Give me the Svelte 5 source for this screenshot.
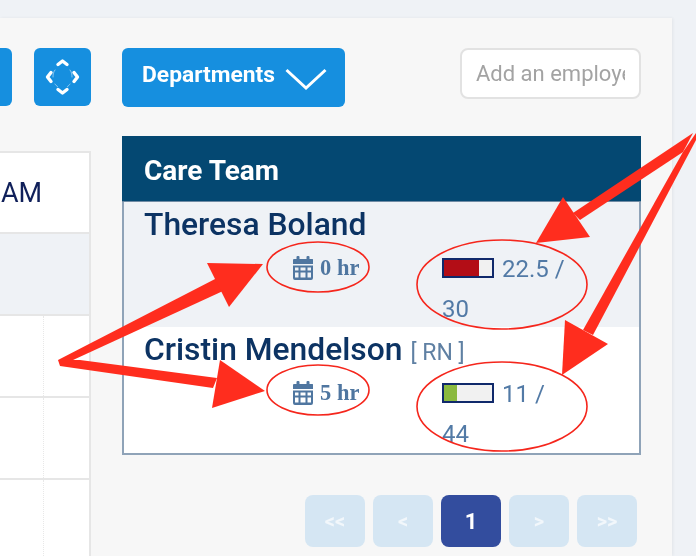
<script>
  const team = [
    { name: 'Theresa Boland', role: '', hours: 0, used: '22.5', total: 30, pct: 72, tone: 'over', shade: true },
    { name: 'Cristin Mendelson', role: '[ RN ]', hours: 5, used: '11', total: 44, pct: 27, tone: 'ok', shade: false }
  ];
  const pages = ['<<', '<', '1', '>', '>>'];
  const rows = [0, 1, 2, 3];
</script>

<div class="page">
  <div class="panel">
    <section class="left">
      <div class="tools">
        <div class="btn stub"></div>
        <button class="btn move" aria-label="Move">
          <svg viewBox="0 0 57 58" width="57" height="58" fill="none" stroke="#fff" stroke-width="3.4" stroke-linecap="round" stroke-linejoin="round">
            <path d="M24 16.500l4.500-3.500 4.500 3.500" />
            <path d="M24 41.500l4.500 3.500 4.500-3.500" />
            <path d="M17 24.500l-3.500 4.500 3.500 4.500" />
            <path d="M40 24.500l3.500 4.500-3.500 4.500" />
            <path d="M21 22c-1.500 2-2 4-2 7M36 22c1.500 2 2 4 2 7M21 36c.8 1.200 1.500 2 2.500 2.500M36 36c-.8 1.200-1.500 2-2.500 2.500" stroke-width="0.9" opacity="0.55" />
          </svg>
        </button>
      </div>
      <div class="table">
        <div class="head">AM</div>
        <div class="band"></div>
        {#each rows as r}
          <div class="cell"><i></i></div>
        {/each}
      </div>
    </section>

    <section class="right">
      <div class="tools">
        <button class="btn dept">
          <span>Departments</span>
          <svg viewBox="0 0 42 24" width="42" height="24" fill="none" stroke="#fff" stroke-width="3">
            <path d="M1.500 3L21 21 40.500 3" />
          </svg>
        </button>
        <input class="search" placeholder="Add an employee" />
      </div>

      <div class="care">
        <h2>Care Team</h2>
        <div class="list">
          {#each team as p}
            <article class:shade={p.shade}>
              <div class="name">{p.name}{#if p.role}<span class="role">{p.role}</span>{/if}</div>
              <div class="stats">
                <div class="hours">
                  <svg viewBox="0 0 20 24" width="20" height="24" fill="#4f76a0">
                    <rect x="3.500" y="0" width="3" height="5" rx="1" />
                    <rect x="13.500" y="0" width="3" height="5" rx="1" />
                    <path d="M1.500 3h18a.5.5 0 0 1 .5.500V8H0V3.500A1.500 1.500 0 0 1 1.500 3z" />
                    <path fill-rule="evenodd" d="M0 9.500h20V22a2 2 0 0 1-2 2H2a2 2 0 0 1-2-2zM2 11.500v3h3.500v-3zM7.500 11.500v3h5v-3zM14.500 11.500v3H18v-3zM2 16.500v5h3.500v-5zM7.500 16.500v5h5v-5zM14.500 16.500v5H18v-5z" />
                  </svg>
                  <span>{p.hours} hr</span>
                </div>
                <div class="load">
                  <span class="bar {p.tone}"><b style:width="{p.pct}%"></b></span>
                  {p.used} / {p.total}
                </div>
              </div>
            </article>
          {/each}
        </div>
      </div>

      <nav class="pager">
        {#each pages as label}
          <button class:on={label === '1'}>{label}</button>
        {/each}
      </nav>
    </section>
  </div>

  <svg class="notes" viewBox="0 0 696 556" width="696" height="556">
    <g fill="none" stroke="#f5261c" stroke-width="1.600">
      <ellipse cx="318" cy="267" rx="51" ry="25" />
      <ellipse cx="318" cy="390" rx="51" ry="25" />
      <ellipse cx="502" cy="284.500" rx="85" ry="44.500" />
      <ellipse cx="502" cy="406.500" rx="85" ry="44.500" />
    </g>
    <g fill="#ff2d1e">
      <polygon points="58,360 217,278 223,291 60,366" />
      <polygon points="207,263 263,264 229,307" />
      <polygon points="60,360 80,360 217,378 213,388 60,366" />
      <polygon points="220,360 265,391 212,408" />
      <polygon points="693,133 573,213 580,220 683,152" />
      <polygon points="563,197 590,237 536,243" />
      <polygon points="696,133 696,140 593,335 583,330 683,152" />
      <polygon points="565,320 608,344 562,375" />
    </g>
  </svg>
</div>

<style>
  :global(body) {
    margin: 0;
    background: #eff2f6;
  }
  .page {
    position: relative;
    width: 696px;
    height: 556px;
    overflow: hidden;
    font-family: Roboto, sans-serif;
  }
  .panel {
    display: flex;
    box-sizing: border-box;
    width: 672px;
    height: 538px;
    margin-top: 18px;
    padding-top: 30px;
    background: #f7f7f7;
    box-shadow: 1px 0 3px rgba(0, 0, 0, 0.06);
    filter: blur(0.45px);
  }
  .left {
    width: 91px;
    flex: none;
  }
  .right {
    width: 519px;
    flex: none;
    margin-left: 31px;
  }
  .tools {
    display: flex;
    align-items: flex-start;
    height: 59px;
  }
  .left .tools {
    gap: 22px;
  }
  .btn {
    box-sizing: border-box;
    height: 58px;
    padding: 0;
    border: 0;
    border-radius: 6px;
    background: #168fdf;
    color: #fff;
  }
  .stub {
    width: 12px;
    border-radius: 0 6px 6px 0;
  }
  .move {
    width: 57px;
  }
  .move svg {
    display: block;
  }
  .dept {
    display: flex;
    align-items: center;
    width: 223px;
    height: 59px;
    padding: 0 0 0 20px;
    gap: 10px;
    font: 700 22.800px Roboto, sans-serif;
  }
  .dept span {
    margin-bottom: 7px;
  }
  .dept svg {
    margin-top: 2px;
  }
  .search {
    box-sizing: border-box;
    width: 181px;
    height: 51px;
    margin-left: auto;
    padding: 0 14px;
    border: 2px solid #e2e2e2;
    border-radius: 8px;
    background: #fff;
    font: 22px Roboto, sans-serif;
    outline: none;
  }
  .search::placeholder {
    color: #a3a3a3;
    opacity: 1;
  }
  .table {
    box-sizing: border-box;
    margin-top: 44px;
    border-right: 2px solid #e6e6e6;
    border-top: 2px solid #e6e6e6;
  }
  .head {
    display: flex;
    align-items: center;
    box-sizing: border-box;
    height: 81px;
    padding-left: 1px;
    background: #fff;
    color: #10205a;
    font-size: 27px;
    border-bottom: 2px solid #e6e6e6;
  }
  .band {
    height: 80px;
    background: #eff2f6;
    border-bottom: 2px solid #e6e6e6;
  }
  .cell {
    box-sizing: border-box;
    height: 82px;
    background: #fff;
    border-bottom: 2px solid #e6e6e6;
  }
  .cell:last-child {
    background: radial-gradient(circle at 0 100%, #f0f0f0, #fff 70px);
  }
  .cell i {
    display: block;
    width: 43px;
    height: 100%;
    border-right: 1px dotted #e8e8e8;
  }
  .care {
    margin-top: 29px;
  }
  h2 {
    display: flex;
    align-items: center;
    box-sizing: border-box;
    height: 66px;
    margin: 0;
    padding: 3px 0 0 22px;
    background: #044872;
    border-bottom: 1px solid #6f8ba4;
    color: #fff;
    font: 700 28px Roboto, sans-serif;
  }
  .list {
    border: 2px solid #8fa3b8;
    border-top: 0;
  }
  article {
    box-sizing: border-box;
    height: 126px;
    padding: 4px 0 0 20px;
    background: #fff;
  }
  article.shade {
    height: 125px;
    background: #eff2f6;
  }
  .name {
    color: #0c3363;
    font-size: 31.800px;
    font-weight: 500;
    line-height: 36px;
  }
  .role {
    margin-left: 8px;
    color: #5f80a3;
    font-size: 23px;
    font-weight: 400;
  }
  .stats {
    display: flex;
    align-items: flex-start;
    margin-top: 9px;
    padding-left: 149px;
  }
  .shade .stats {
    margin-top: 13px;
  }
  .hours {
    display: flex;
    align-items: center;
    gap: 7px;
    width: 149px;
    color: #4f76a0;
    font: 700 22.500px "Liberation Serif", serif;
  }
  .hours svg {
    flex: none;
  }
  .load {
    width: 130px;
    margin-top: -6px;
    color: #527aa6;
    font-size: 24px;
    line-height: 40px;
  }
  .bar {
    display: inline-block;
    box-sizing: border-box;
    width: 52px;
    height: 20px;
    margin-right: 2px;
    vertical-align: -1px;
    border: 2px solid #10296b;
    background: #f1f1f1;
  }
  .bar b {
    display: block;
    height: 100%;
  }
  .over b {
    background: #b30d16;
  }
  .ok b {
    background: #8ab93f;
  }
  .pager {
    display: flex;
    justify-content: flex-end;
    gap: 8px;
    margin-top: 40px;
    padding-right: 4px;
  }
  .pager button {
    width: 60px;
    height: 52px;
    padding: 0;
    border: 0;
    border-radius: 8px;
    background: #d5e6f3;
    color: #f2f7fb;
    font: 700 20px Roboto, sans-serif;
  }
  .pager .on {
    background: #334d9e;
    color: #fff;
    font-size: 22px;
  }
  .notes {
    position: absolute;
    inset: 0;
    pointer-events: none;
    filter: blur(0.3px);
  }
</style>
